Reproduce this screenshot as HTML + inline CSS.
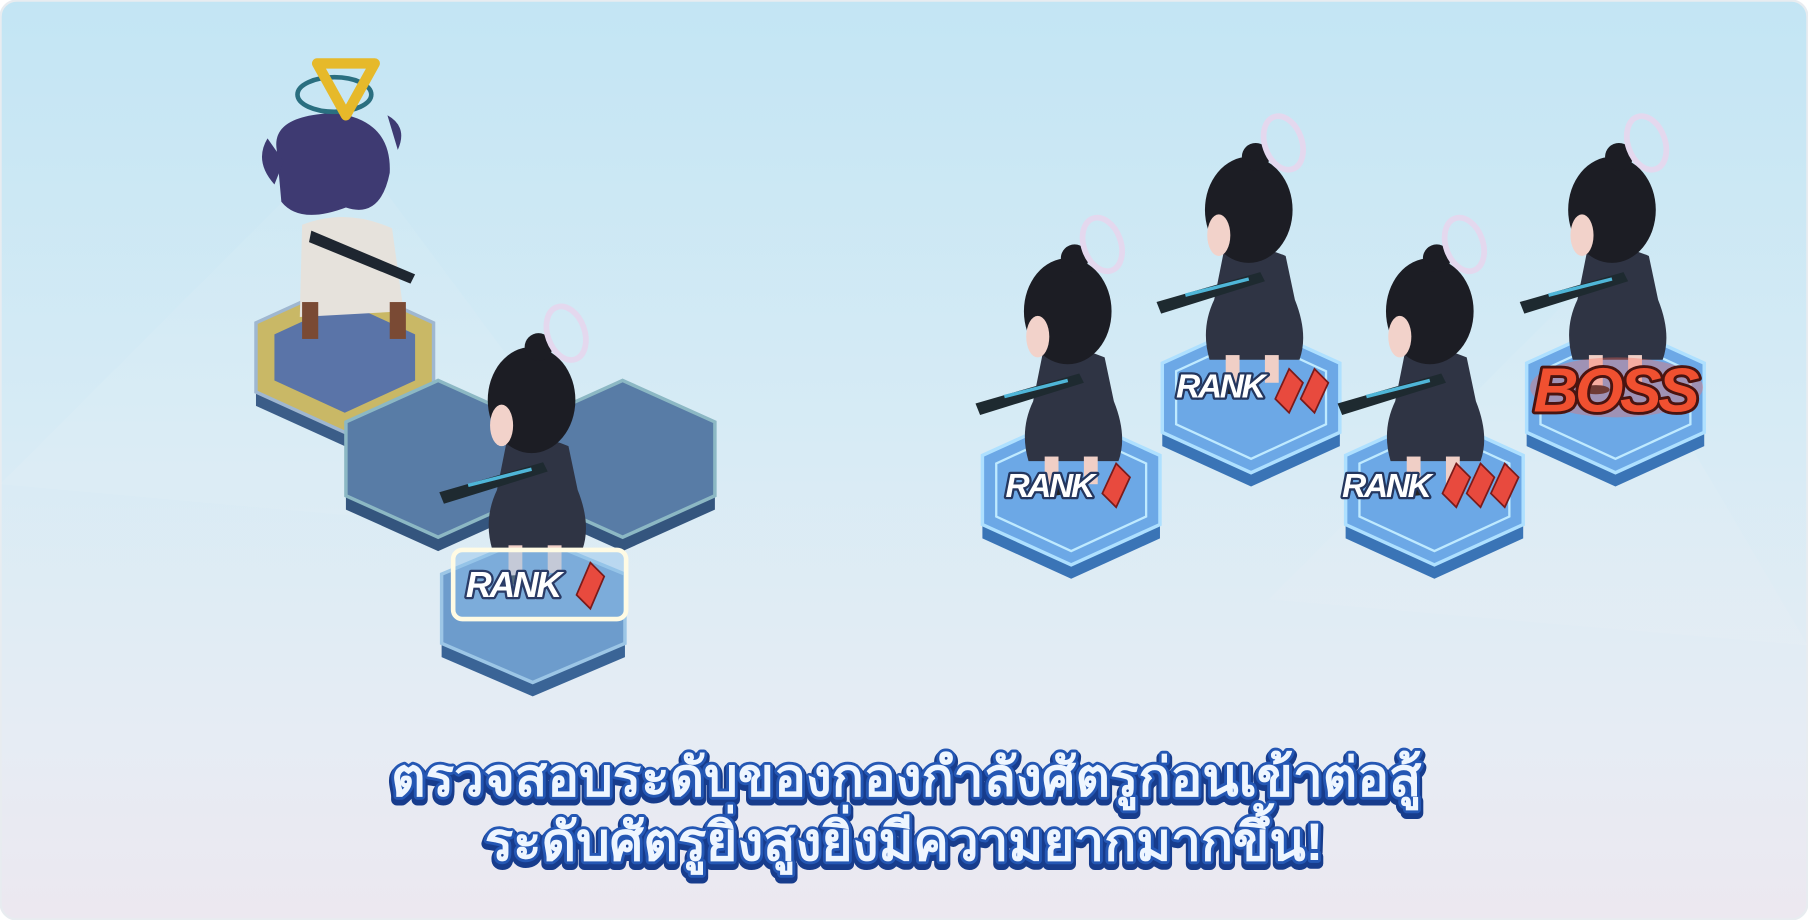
<!DOCTYPE html>
<html><head><meta charset="utf-8"><style>
html,body{margin:0;padding:0;width:1808px;height:920px;overflow:hidden;background:#fff}
svg{display:block}
.t{font-family:"Liberation Sans",sans-serif;font-weight:900}
</style></head><body>
<svg width="1808" height="920" viewBox="0 0 1568 798" preserveAspectRatio="none">
<defs>
<linearGradient id="bg" x1="0" y1="0" x2="0" y2="1">
<stop offset="0" stop-color="#c3e5f4"/><stop offset="0.45" stop-color="#d6ebf5"/><stop offset="0.8" stop-color="#e6ecf4"/><stop offset="1" stop-color="#ece8f0"/></linearGradient>
<g id="enemy">
<path d="M-22 40 Q5 30 32 42 L40 80 Q52 110 44 132 L-34 132 Q-42 105 -30 80 Z" fill="#2f3444"/>
<rect x="-20" y="128" width="12" height="30" fill="#f0cfc6"/><rect x="14" y="128" width="12" height="24" fill="#f0cfc6"/>
<ellipse cx="-14" cy="158" rx="12" ry="4" fill="#222"/>
<path d="M-80 82 L10 56 L14 64 L-76 92 Z" fill="#1e2a30"/><path d="M-55 76 L0 62" stroke="#4fb6d8" stroke-width="3"/>
<ellipse cx="0" cy="2" rx="38" ry="46" fill="#1c1d24"/>
<circle cx="6" cy="-44" r="12" fill="#1c1d24"/>
<ellipse cx="-26" cy="24" rx="10" ry="18" fill="#f2d2ca"/>
<ellipse cx="30" cy="-56" rx="16" ry="24" fill="none" stroke="#e4d8ee" stroke-width="5" transform="rotate(-20 30 -56)"/>
</g>
</defs>
<rect x="0" y="0" width="1568" height="798" rx="14" fill="url(#bg)"/>
<rect x="0.5" y="0.5" width="1567" height="797" rx="14" fill="none" stroke="#e8ecf0" stroke-width="2"/>
<path d="M0 420 L300 120 L560 470 Z" fill="#fff" opacity=".08"/>
<path d="M1100 520 L1380 240 L1568 560 Z" fill="#fff" opacity=".08"/>

<g>
<polygon points="299,257 376,292 376,352 299,387 222,352 222,292" fill="#3b5d88"/>
<polygon points="299,245 376,280 376,340 299,375 222,340 222,280" fill="#c9b866" stroke="#9fb7d0" stroke-width="3"/>
<polygon points="299,262 360,290 360,330 299,358 238,330 238,290" fill="#5a74a8"/>
<polygon points="380,342 460,378 460,442 380,478 300,442 300,378" fill="#34557e"/>
<polygon points="380,330 460,366 460,430 380,466 300,430 300,366" fill="#587ca6" stroke="#8cb8c4" stroke-width="3"/>
<polygon points="540,342 620,378 620,442 540,478 460,442 460,378" fill="#34557e"/>
<polygon points="540,330 620,366 620,430 540,466 460,430 460,366" fill="#587ca6" stroke="#8cb8c4" stroke-width="3"/>
<polygon points="462,477 542,510 542,570 462,604 383,570 383,510" fill="#3a6496"/>
<polygon points="462,465 542,498 542,558 462,592 383,558 383,498" fill="#6d9ccc" stroke="#9cc6e6" stroke-width="3"/>
</g>
<g>
<path d="M262 195 Q300 180 340 198 L350 270 L260 275 Z" fill="#e6e2dc"/>
<rect x="262" y="262" width="14" height="32" fill="#7a4a34"/><rect x="338" y="262" width="14" height="32" fill="#7a4a34"/>
<path d="M270 200 L360 238 L356 246 L268 210 Z" fill="#1e2630"/>
<path d="M240 130 Q235 100 290 98 Q340 104 338 150 Q330 190 300 180 Q260 195 244 175 Z" fill="#3e3a72"/>
<path d="M232 120 Q220 140 238 160 L246 140 Z M336 100 Q354 110 345 130 Z" fill="#3e3a72"/>
<ellipse cx="290" cy="82" rx="32" ry="15" fill="none" stroke="#2a6f80" stroke-width="4"/>
<polygon points="275,55 325,55 300,100" fill="none" stroke="#e6b92a" stroke-width="9" stroke-linejoin="round"/>
</g>
<use href="#enemy" x="461" y="345"/>
<rect x="393" y="477" width="150" height="60" rx="8" fill="#8fc0ea" fill-opacity=".45" stroke="#fffbe4" stroke-width="4"/>
<text x="404" y="518" class="t" font-size="31" font-style="italic" fill="#fff" stroke="#2a3b66" stroke-width="4" paint-order="stroke" stroke-linejoin="round" letter-spacing="-2">RANK</text>
<polygon points="512,488 524,500 512,528 500,516" fill="#e84a3e" stroke="#7a1a1a" stroke-width="1.5"/>

<g>
<polygon points="929,372 1006,407 1006,467 929,502 852,467 852,407" fill="#3a74b6"/>
<polygon points="929,360 1006,395 1006,455 929,490 852,455 852,395" fill="#6ca8e6" stroke="#aee0ff" stroke-width="3"/>
<polygon points="929,372 994,402 994,448 929,478 864,448 864,402" fill="none" stroke="#bfeaff" stroke-width="2"/>
<polygon points="1085,292 1162,327 1162,387 1085,422 1008,387 1008,327" fill="#3a74b6"/>
<polygon points="1085,280 1162,315 1162,375 1085,410 1008,375 1008,315" fill="#6ca8e6" stroke="#aee0ff" stroke-width="3"/>
<polygon points="1085,292 1150,322 1150,368 1085,398 1020,368 1020,322" fill="none" stroke="#bfeaff" stroke-width="2"/>
<polygon points="1244,372 1321,407 1321,467 1244,502 1167,467 1167,407" fill="#3a74b6"/>
<polygon points="1244,360 1321,395 1321,455 1244,490 1167,455 1167,395" fill="#6ca8e6" stroke="#aee0ff" stroke-width="3"/>
<polygon points="1244,372 1309,402 1309,448 1244,478 1179,448 1179,402" fill="none" stroke="#bfeaff" stroke-width="2"/>
<polygon points="1401,292 1478,327 1478,387 1401,422 1324,387 1324,327" fill="#3a74b6"/>
<polygon points="1401,280 1478,315 1478,375 1401,410 1324,375 1324,315" fill="#6ca8e6" stroke="#aee0ff" stroke-width="3"/>
<polygon points="1401,292 1466,322 1466,368 1401,398 1336,368 1336,322" fill="none" stroke="#bfeaff" stroke-width="2"/>
</g>
<use href="#enemy" x="926" y="268"/>
<use href="#enemy" x="1083" y="180"/>
<use href="#enemy" x="1240" y="268"/>
<use href="#enemy" x="1398" y="180"/>

<g class="t" font-size="29" font-style="italic" fill="#fff" stroke="#24365e" stroke-width="4" paint-order="stroke" stroke-linejoin="round" letter-spacing="-2">
<text x="872" y="431">RANK</text>
<text x="1020" y="345">RANK</text>
<text x="1164" y="431">RANK</text>
</g>
<g fill="#e84a3e" stroke="#7a1a1a" stroke-width="1.5">
<polygon points="968,402 980,414 968,440 956,428"/>
<polygon points="1118,320 1130,332 1118,358 1106,346"/>
<polygon points="1140,320 1152,332 1140,358 1128,346"/>
<polygon points="1263,402 1275,414 1263,440 1251,428"/>
<polygon points="1284,402 1296,414 1284,440 1272,428"/>
<polygon points="1305,402 1317,414 1305,440 1293,428"/>
</g>
<ellipse cx="1402" cy="336" rx="75" ry="26" fill="#ff6a5a" opacity=".35"/>
<text x="1330" y="357" class="t" font-size="54" font-style="italic" fill="#f05030" stroke="#4a1410" stroke-width="5" paint-order="stroke" stroke-linejoin="round" letter-spacing="-3">BOSS</text>

<g font-family="'Liberation Sans','DejaVu Sans',sans-serif" font-weight="bold" text-anchor="middle" font-size="46">
<text x="786" y="690" fill="#173c8c" stroke="#173c8c" stroke-width="9" stroke-linejoin="round" transform="translate(0,3)">ตรวจสอบระดับของกองกำลังศัตรูก่อนเข้าต่อสู้</text>
<text x="786" y="690" fill="#eef6ff" stroke="#2457b4" stroke-width="5" stroke-linejoin="round" paint-order="stroke">ตรวจสอบระดับของกองกำลังศัตรูก่อนเข้าต่อสู้</text>
<text x="784" y="746" fill="#173c8c" stroke="#173c8c" stroke-width="9" stroke-linejoin="round" transform="translate(0,3)">ระดับศัตรูยิ่งสูงยิ่งมีความยากมากขึ้น!</text>
<text x="784" y="746" fill="#eef6ff" stroke="#2457b4" stroke-width="5" stroke-linejoin="round" paint-order="stroke">ระดับศัตรูยิ่งสูงยิ่งมีความยากมากขึ้น!</text>
</g>
</svg>
</body></html>
